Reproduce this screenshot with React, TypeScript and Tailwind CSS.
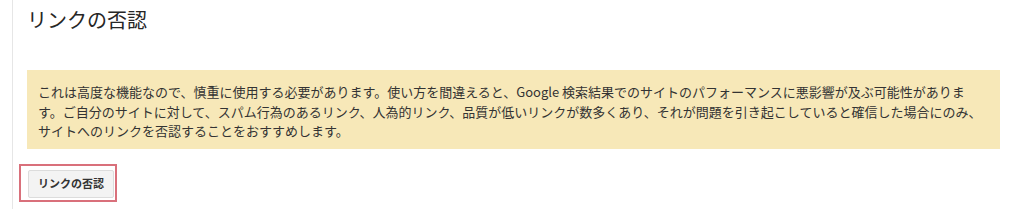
export default function App() {
  const font = { fontFamily: '"Noto Sans CJK JP", "Noto Sans", "Liberation Sans", sans-serif' };
  return (
    <div className="w-full h-[209px] bg-white pl-[12px] overflow-hidden" style={font}>
      <div className="h-full border-l border-[#e6e6e6] pl-[14px] pr-[12px] pt-[6px]">
        <h1 className="text-[20px] leading-[28px] font-normal text-[#262626]">リンクの否認</h1>
        <div className="mt-[36px] bg-[#f7e8b8] pl-[11px] pr-[8px] pt-[12px] pb-[8px] text-[13px] leading-[19.5px] text-[#333]">
          これは高度な機能なので、慎重に使用する必要があります。使い方を間違えると、Google 検索結果でのサイトのパフォーマンスに悪影響が及ぶ可能性がありま
          <br />
          す。ご自分のサイトに対して、スパム行為のあるリンク、人為的リンク、品質が低いリンクが数多くあり、それが問題を引き起こしていると確信した場合にのみ、
          <br />
          サイトへのリンクを否認することをおすすめします。
        </div>
        <div className="mt-[15px] -ml-[8px] inline-flex border-2 border-[#d9707b] pl-[7px] pr-[1px] pt-[4px] pb-[2px]">
          <button className="h-[28px] px-[9px] bg-[#f3f3f3] border border-[#dcdcdc] rounded-[2px] text-[11px] font-bold text-[#333]">
            リンクの否認
          </button>
        </div>
      </div>
    </div>
  );
}
